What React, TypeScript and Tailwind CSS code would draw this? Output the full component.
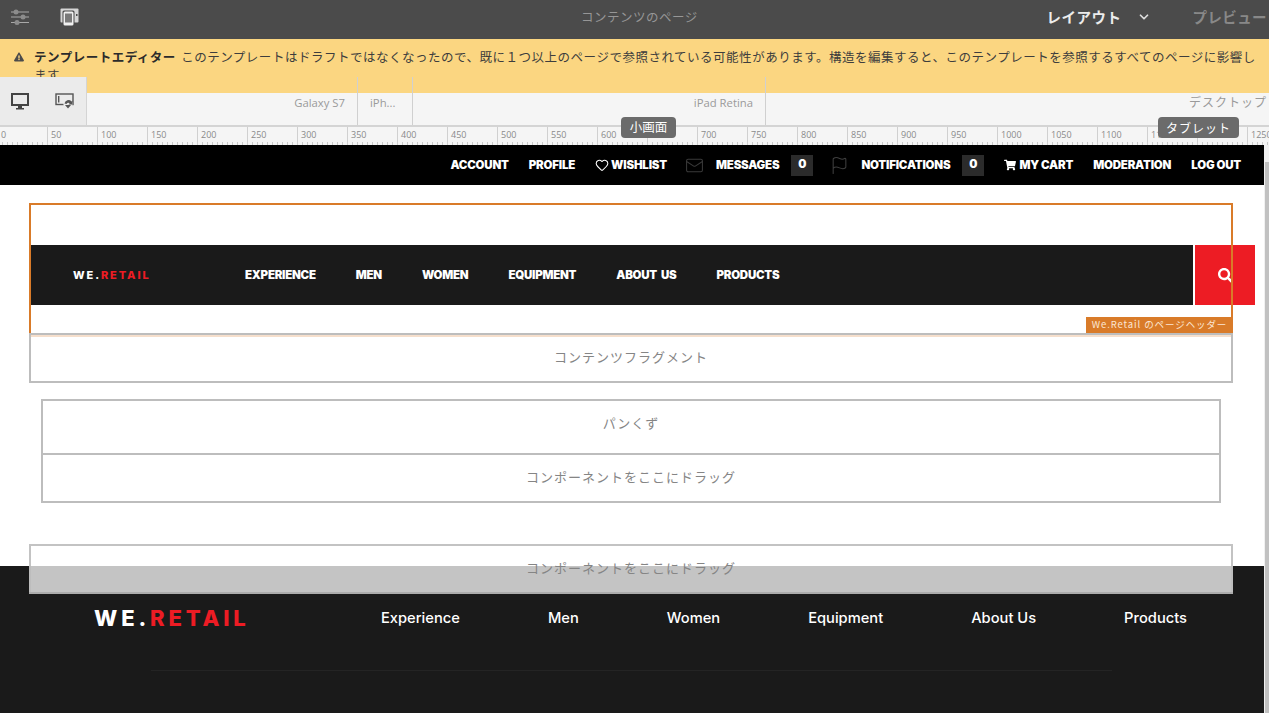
import { ChevronDown, Flag, Heart, Mail } from "lucide-react"
import { FaExclamationTriangle, FaSearch, FaShoppingCart } from "react-icons/fa"

const jp = "font-['Noto_Sans_CJK_JP','Noto_Sans',sans-serif]"
const rulerMarks = Array.from({ length: 26 }, (_, i) => i * 50)
const tickOffsets = [5, 10, 15, 20, 25, 30, 35, 40, 45]

function SlidersIcon() {
  return (
    <svg width="20" height="16" viewBox="0 0 20 16">
      <rect x="1" y="2.5" width="18" height="1" fill="#a8a8a8" />
      <rect x="1" y="7.5" width="18" height="1" fill="#a8a8a8" />
      <rect x="1" y="13" width="18" height="1" fill="#a8a8a8" />
      <circle cx="6" cy="3" r="2.5" fill="#8c8c8c" />
      <circle cx="13" cy="8" r="2.5" fill="#8c8c8c" />
      <circle cx="7" cy="13.5" r="2.5" fill="#8c8c8c" />
    </svg>
  )
}

function DevicesIcon() {
  return (
    <svg width="19" height="18" viewBox="0 0 19 18">
      <rect x="0.5" y="0.5" width="18" height="14" rx="1" fill="#d6d6d6" />
      <rect x="16" y="6" width="1.5" height="2" fill="#4b4b4b" />
      <rect x="2.5" y="2.5" width="12" height="15.5" rx="1.5" fill="#4b4b4b" />
      <rect x="3.5" y="3.5" width="10" height="14" rx="1.5" fill="#f0f0f0" />
      <rect x="5" y="5.5" width="7" height="9" fill="#7a7a7a" />
    </svg>
  )
}

function DesktopIcon() {
  return (
    <svg width="18" height="17" viewBox="0 0 18 17">
      <rect x="1" y="1" width="16" height="11" fill="none" stroke="#444" strokeWidth="2" />
      <rect x="7" y="13" width="4" height="2" fill="#444" />
      <rect x="5" y="15" width="8" height="1.5" fill="#444" />
    </svg>
  )
}

function TabletRotateIcon() {
  return (
    <svg width="19" height="16" viewBox="0 0 19 16">
      <rect x="1" y="1" width="17" height="10.5" fill="none" stroke="#555" strokeWidth="1.4" />
      <rect x="3" y="3" width="1.4" height="6.5" fill="#555" />
      <circle cx="13" cy="11" r="4.6" fill="#ebebeb" />
      <path d="M9.5 10.5a4 4 0 0 1 7-2l1-1v4h-4l1.2-1.2a2 2 0 0 0-3.2.6z M10 12h6l-3 3.5z" fill="#555" />
    </svg>
  )
}

function Ruler() {
  return (
    <div className="h-5 bg-[#f5f5f5] border-t-2 border-[#d4d4d4] flex overflow-hidden">
      <div className="flex shrink-0 -ml-[3px]">
        {rulerMarks.map((mark) => (
          <div key={mark} className="relative w-[50px] h-full border-l border-[#d0d0d0] shrink-0">
            <span className="block pl-[3px] pt-[2px] text-[9px] leading-[12px] text-[#8a8a8a] font-['Open_Sans',sans-serif]">{mark}</span>
            <svg width="50" height="3" className="absolute bottom-0 left-0">
              {tickOffsets.map((t) => (
                <rect key={t} x={t - 1} y="0" width="1" height="3" fill="#c8c8c8" />
              ))}
            </svg>
          </div>
        ))}
      </div>
    </div>
  )
}

function TopLink({ children }: { children: React.ReactNode }) {
  return <span className="pt-[2px] text-white text-[11.5px] font-black tracking-[-0.2px] whitespace-nowrap">{children}</span>
}

function Count() {
  return <span className="w-[22px] h-[21px] bg-[#2b2b2b] flex items-center justify-center text-white text-[11.5px] font-black">0</span>
}

function DropBox({ label, className }: { label: string; className: string }) {
  return (
    <div className={`relative border-2 border-[#bdbdbd] flex items-center justify-center text-[13px] tracking-[1px] text-[#858585] ${jp} ${className}`}>
      {label}
    </div>
  )
}

export default function App() {
  return (
    <div className="relative w-[1269px] h-[713px] overflow-hidden bg-white font-['Inter',sans-serif]">
      {/* author toolbar */}
      <div className={`h-[39px] bg-[#4b4b4b] relative flex items-center pl-[10px] pr-[2px] pb-[5px] ${jp}`}>
        <SlidersIcon />
        <div className="ml-[30px]"><DevicesIcon /></div>
        <span className="absolute left-[581px] text-[12.5px] tracking-[0.5px] text-[#969696]">コンテンツのページ</span>
        <span className="ml-auto text-[14.5px] font-bold tracking-[0.5px] text-[#ececec]">レイアウト</span>
        <ChevronDown size={14} strokeWidth={3} className="ml-[15px] text-[#ddd]" />
        <span className="ml-[42px] text-[14.5px] font-bold tracking-[0.4px] text-[#888] whitespace-nowrap">プレビュー</span>
      </div>

      {/* warning */}
      <div className={`h-[54px] bg-[#fbd681] pl-[14px] pr-[10px] pt-[9px] flex text-[12.5px] leading-[18px] text-[#3d3d3d] ${jp}`}>
        <FaExclamationTriangle size={10} className="mt-[4px] mr-[10px] shrink-0 text-[#4b4b4b]" />
        <p className="tracking-[0.51px]">
          <b className="font-bold text-[#2b2b2b] mr-[2px]">テンプレートエディター</b> このテンプレートはドラフトではなくなったので、既に１つ以上のページで参照されている可能性があります。構造を編集すると、このテンプレートを参照するすべてのページに影響します。
        </p>
      </div>

      {/* emulator */}
      <div className="h-[32px] bg-[#f5f5f5] flex text-[11.3px] text-[#9a9a9a] font-['Open_Sans',sans-serif]">
        <div className="w-[358px] pr-[12px] text-right border-r border-[#d0d0d0] -mt-[16px] pt-[18px] leading-[16px]">Galaxy S7</div>
        <div className="w-[55px] pl-[12px] border-r border-[#d0d0d0] -mt-[16px] pt-[18px] leading-[16px]">iPh...</div>
        <div className="w-[353px] pr-[12px] text-right border-r border-[#d0d0d0] -mt-[16px] pt-[18px] leading-[16px]">iPad Retina</div>
        <div className={`flex-1 text-right pr-[2px] text-[12px] tracking-[1px] ${jp}`}>デスクトップ</div>
      </div>
      <Ruler />

      {/* emulator icons panel */}
      <div className="absolute left-0 top-[77px] w-[87px] h-[48px] bg-[#ebebeb] border-r border-[#d4d4d4] flex items-center pl-[11px] gap-[26px]">
        <DesktopIcon />
        <TabletRotateIcon />
      </div>
      <span className={`absolute left-[621px] top-[117px] w-[55px] h-[21px] rounded-[4px] bg-[#6b6b6b] text-white text-[12.5px] flex items-center justify-center ${jp}`}>小画面</span>
      <span className={`absolute left-[1158px] top-[117px] w-[81px] h-[21px] rounded-[4px] bg-[#6b6b6b] text-white text-[12px] tracking-[1px] flex items-center justify-center ${jp}`}>タブレット</span>

      {/* page */}
      <div className="h-[40px] bg-black flex items-center justify-end gap-[20px] pr-[28px]">
        <TopLink>ACCOUNT</TopLink>
        <TopLink>PROFILE</TopLink>
        <span className="flex items-center gap-[2px] -mr-[2px]"><Heart size={14} color="#fff" strokeWidth={1.8} /><TopLink>WISHLIST</TopLink></span>
        <span className="flex items-center gap-[12px] -mr-[3px]">
          <Mail size={19} strokeWidth={1.3} className="text-[#3a3a3a]" />
          <TopLink>MESSAGES</TopLink>
          <Count />
        </span>
        <span className="flex items-center gap-[12px]">
          <Flag size={19} strokeWidth={1.3} className="text-[#3f3f3f]" />
          <TopLink>NOTIFICATIONS</TopLink>
          <Count />
        </span>
        <span className="flex items-center gap-[3px]"><FaShoppingCart size={12} color="#fff" /><TopLink>MY CART</TopLink></span>
        <TopLink>MODERATION</TopLink>
        <TopLink>LOG OUT</TopLink>
      </div>

      <div className="h-[381px] pt-[18px] pl-[29px] pr-[36px]">
        {/* header experience fragment */}
        <div className="relative w-[1204px] h-[132px] pt-[42px] pl-[2px]">
          <div className="flex w-[1224px] h-[60px] gap-[2px]">
            <div className="w-[1162px] bg-[#1a1a1a] flex items-center">
              <span className="ml-[42px] w-[172px] text-[11px] font-extrabold tracking-[1.9px] text-white">WE.<span className="text-[#ed1c24]">RETAIL</span></span>
              <div className="flex gap-[40px] pt-[2px] text-[11.5px] font-black tracking-[-0.25px] [word-spacing:2px] text-white">
                <span>EXPERIENCE</span>
                <span>MEN</span>
                <span>WOMEN</span>
                <span>EQUIPMENT</span>
                <span>ABOUT US</span>
                <span>PRODUCTS</span>
              </div>
            </div>
            <div className="w-[60px] bg-[#ed1c24] flex items-center justify-center">
              <FaSearch size={15} color="#fff" />
            </div>
          </div>
          <div className="absolute inset-0 border-2 border-[#d97b29]" />
          <span className={`absolute right-0 bottom-[2px] h-[16px] w-[147px] pb-[1px] bg-[#d97b29] text-[#fbe6d4] text-[9.5px] tracking-[0.9px] flex items-center justify-center whitespace-nowrap ${jp}`}>We.Retail のページヘッダー</span>
        </div>
        <DropBox label="コンテンツフラグメント" className="w-[1204px] h-[50px] -mt-[2px] pb-[2px] shadow-[inset_0_2px_0_#f6dfcc]" />
        <DropBox label="パンくず" className="w-[1180px] h-[56px] ml-[12px] mt-[16px] pb-[8px]" />
        <DropBox label="コンポーネントをここにドラッグ" className="w-[1180px] h-[50px] ml-[12px] -mt-[2px] pb-[2px]" />
      </div>

      {/* footer */}
      <div className="h-[147px] bg-[#1a1a1a] pt-[38px]">
        <div className="flex items-center h-[28px] pl-[94px]">
          <span className="w-[287px] text-[22px] font-extrabold tracking-[3.85px] text-white">WE.<span className="text-[#ed1c24]">RETAIL</span></span>
          <div className="flex gap-[88px] pt-[1px] text-[14.7px] font-medium text-white whitespace-nowrap">
            <span>Experience</span>
            <span>Men</span>
            <span>Women</span>
            <span>Equipment</span>
            <span>About Us</span>
            <span>Products</span>
          </div>
        </div>
        <div className="mt-[38px] ml-[151px] w-[961px] border-t border-[#242424]" />
      </div>

      {/* layout container overlay */}
      <div className={`absolute left-[29px] top-[544px] w-[1204px] h-[50px] pb-[3px] border-2 border-[#bdbdbd]/90 bg-[linear-gradient(to_bottom,transparent_20px,rgba(255,255,255,0.74)_20px)] flex items-center justify-center text-[13px] tracking-[1px] text-[#858585] ${jp}`}>
        コンポーネントをここにドラッグ
      </div>

      {/* scrollbar */}
      <div className="absolute right-0 top-[145px] w-[5px] h-[568px] bg-[#f1f1f1]">
        <div className="mt-[17px] ml-[1px] h-[551px] bg-[#c1c1c1]" />
      </div>
    </div>
  )
}
